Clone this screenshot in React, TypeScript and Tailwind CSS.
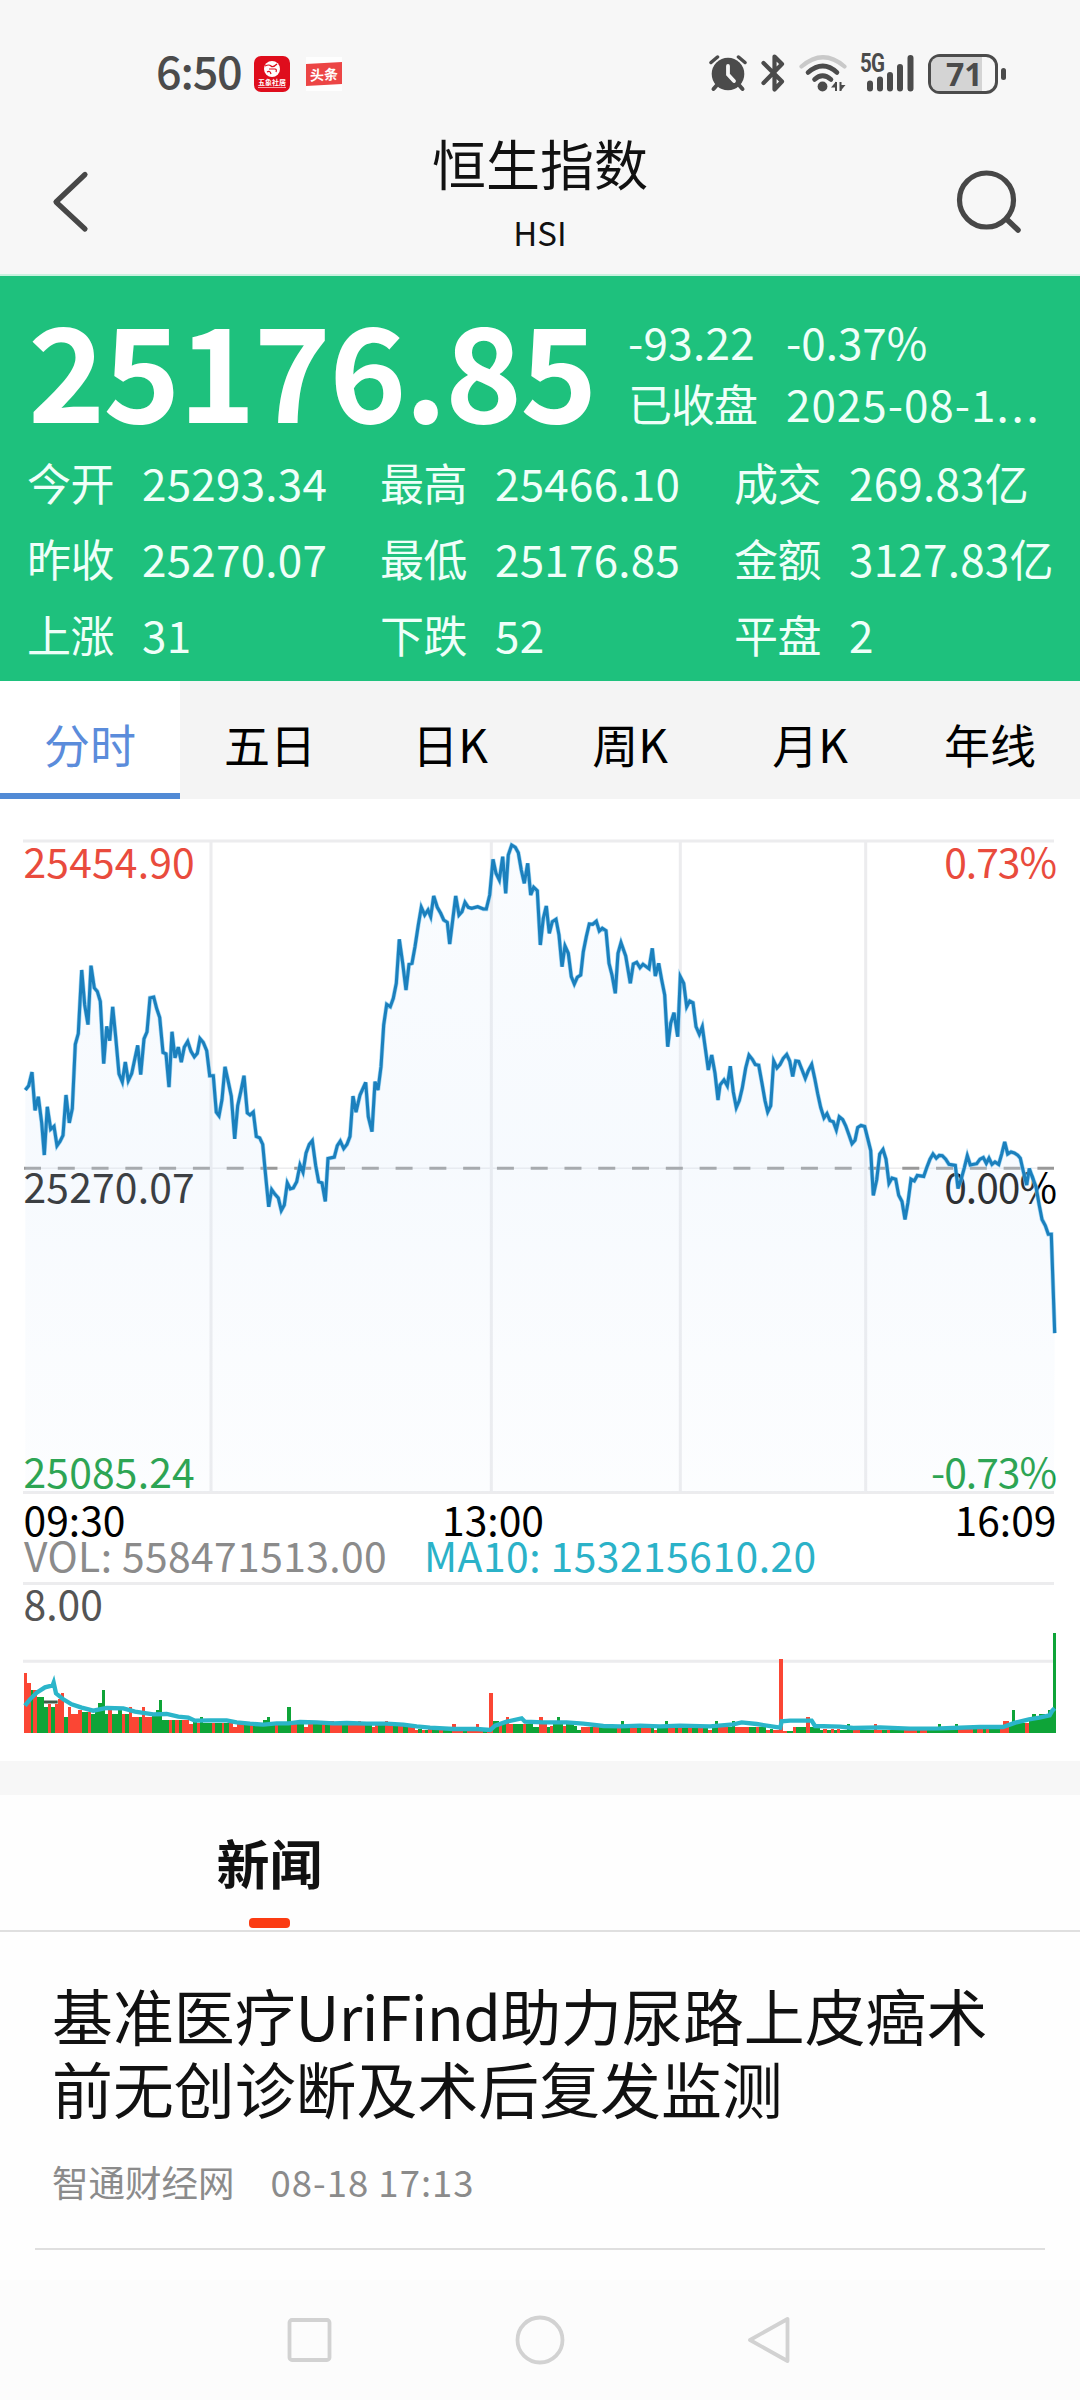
import React from 'react';

const FONT = "font-['Noto_Sans_CJK_SC','Noto_Sans',sans-serif]";

type Stat = { label: string; value: string };

const STATS: Stat[] = [
  { label: '今开', value: '25293.34' },
  { label: '最高', value: '25466.10' },
  { label: '成交', value: '269.83亿' },
  { label: '昨收', value: '25270.07' },
  { label: '最低', value: '25176.85' },
  { label: '金额', value: '3127.83亿' },
  { label: '上涨', value: '31' },
  { label: '下跌', value: '52' },
  { label: '平盘', value: '2' },
];

const TABS = ['分时', '五日', '日K', '周K', '月K', '年线'];

/* Price samples per session block; each block has its own origin and vertical unit. */
const PRICE_BLOCKS = [
  {
    x: 0,
    y: 680,
    unitY: 2.8,
    data:
      '76,1148 86,1136 96,1098 105,1205 115,1167 125,1240 133,1330 142,1195 152,1258 162,1250 171,1304 180,1292 189,1275 198,1162 208,1240 217,1200 226,1020 235,990 245,812 254,910 264,965 273,800 283,862 292,872 301,900 311,1074 320,970 329,1010 338,915 347,1000 357,1103 367,1125 376,1070 385,1122 395,1102 413,1023 422,1105 432,1005 441,985 450,890 461,888 470,920 479,945 489,1043 498,1047 507,1140 516,985 525,1058 535,1028 544,1070 553,1028 563,1012 573,1040 583,1055 592,1045 600,1004 610,1015 620,1038 629,1108 640,1108 649,1210 657,1220 666,1175 675,1083 685,1125 694,1165 704,1285 713,1192 723,1150 732,1108 742,1212 750,1218 760,1210 769,1278 779,1282 788,1300 797,1390 806,1475 815,1427 825,1440 835,1450 844,1485 853,1470 862,1408 871,1425 880,1422 890,1405 900,1358 909,1378 918,1325 928,1300 937,1290 947,1360 956,1405 966,1408 976,1460 984,1340 1003,1336 1012,1304 1021,1291 1031,1312 1041,1300 1050,1278 1059,1165 1068,1210',
  },
  {
    x: 360,
    y: 820,
    unitY: 3,
    data:
      '0,825 17,787 25,890 36,935 45,785 54,810 63,740 71,615 80,553 91,560 100,535 109,490 118,358 128,430 138,510 147,433 156,430 165,380 175,315 184,262 194,285 204,270 212,290 221,228 232,262 242,280 251,300 262,307 269,372 278,300 287,228 297,285 306,275 315,247 325,262 335,265 353,260 370,267 379,267 389,225 399,118 408,160 418,180 428,110 437,220 445,105 455,75 466,82 475,98 484,150 493,190 503,130 512,225 521,202 532,212 541,375 550,295 559,258 568,340 577,305 588,298 597,345 606,440 615,378 625,400 634,470 643,492 652,472 662,465 670,395 679,350 688,312 698,313 709,304 718,333 727,325 738,332 747,430 756,465 766,520 774,400 783,368 797,408 811,490 820,432 830,427 840,443 849,433 867,446 877,385 886,468 896,430 905,480 914,525 923,680 932,610 942,578 953,650 961,470 971,490 980,560 989,543 999,548 1008,620 1018,643 1027,620 1036,685 1045,750 1055,705 1065,760 1074,840',
  },
  {
    x: 720,
    y: 820,
    unitY: 2.904,
    data:
      '0,770 4,765 12,755 22,772 31,715 40,790 49,835 58,815 67,778 77,720 87,683 97,695 106,710 116,712 126,765 135,815 143,848 152,830 161,700 171,720 180,710 190,692 200,681 209,700 218,745 227,700 236,701 246,725 256,750 265,728 275,710 284,750 293,795 302,835 312,865 321,853 330,873 340,876 349,900 358,862 368,870 377,888 387,915 396,940 405,930 413,893 423,887 434,890 443,925 452,960 460,1090 470,1045 479,970 489,957 498,985 507,1055 516,1040 527,1043 536,1090 546,1108 555,1160 564,1110 573,1043 583,1048 592,1032 611,1035 620,1010 630,985 639,970 649,982 658,974 667,975 677,985 687,1000 706,1003 714,1070 723,1045 733,1010 742,975 751,1002 770,998 780,985 790,980 799,997 807,982 816,1000 825,993 836,1000 845,970 854,935 863,970 873,964 883,967 893,973 901,982 911,1025 920,1060 928,1012 938,1040 948,1065 957,1115 966,1160 976,1178 985,1203 994,1203 1004,1490',
  },
];

const PRICE_LINE = PRICE_BLOCKS.map((b) =>
  b.data
    .split(' ')
    .map((p) => {
      const [x, y] = p.split(',').map(Number);
      return `${(b.x + x / 3).toFixed(1)},${(b.y + y / b.unitY).toFixed(1)}`;
    })
    .join(' '),
).join(' ');

/* Volume runs: "start top direction", each run lasting until the next one starts. */
const VOLUME =
  '12 40 r;22 70 r;33 90 g;40 90 r;50 111 g;72 140 g;84 131 r;93 142 g;104 131 r;113 118 r;123 100 r;132 172 g;144 142 r;153 162 r;175 150 r;185 155 g;204 155 r;214 162 g;225 150 g;235 130 g;245 90 g;255 162 g;265 150 r;275 162 g;295 150 g;305 162 r;316 162 g;326 142 r;337 172 r;358 172 g;366 140 r;376 172 r;396 165 g;408 150 g;417 121 g;427 181 g;446 181 r;456 181 g;466 181 r;478 181 g;486 181 r;508 192 r;518 185 g;530 188 r;540 172 g;550 188 g;575 188 r;585 188 g;605 188 r;613 188 g;628 188 r;640 200 r;650 192 r;672 195 g;690 195 r;700 197 g;730 181 g;740 170 g;750 195 g;765 195 r;773 195 g;800 141 g;812 192 r;832 192 g;853 200 r;865 192 r;880 192 g;905 192 r;915 195 g;930 182 r;942 195 r;965 182 g;972 195 g;983 195 r;1015 182 r;1022 195 r;1035 196 g;1055 200 r;1065 196 r;1075 196 g;1095 182 r;1105 196 r;1120 196 g;1135 196 r;1150 198 g;1165 202 r;1185 211 r;1195 207 g;1205 211 r;1215 211 g;1225 207 r;1235 207 g;1258 209 r;1268 209 g;1297 191 r;1307 209 r;1328 209 g;1340 209 r;1368 191 r;1377 209 r;1390 209 g;1400 209 r;1408 100 r;1418 182 g;1437 192 r;1447 192 g;1458 171 r;1468 192 r;1480 192 g;1508 192 r;1518 192 g;1538 200 g;1558 171 r;1570 192 r;1580 200 g;1590 198 r;1600 192 g;1610 171 g;1620 192 g;1628 198 r;1638 192 g;1650 182 g;1662 198 g;1672 211 g;1682 202 r;1710 202 g;1720 202 r;1738 202 g;1790 202 r;1802 182 g;1812 202 g;1830 202 r;1852 202 g;1862 205 r;1882 202 r;1892 205 g;1902 211 r;1912 202 g;1935 182 g;1945 202 r;1965 202 g;1975 202 r;1985 202 g;2005 202 r;2015 202 g;2035 202 r;2050 202 g;2063 211 r;2075 202 g;2085 182 g;2095 202 r;2125 202 g;2136 182 g;2146 201 r;2186 201 g;2208 201 r;2218 201 g;2238 211 r;2250 207 g;2260 211 r;2278 -2 r;2288 212 r;2300 212 g;2318 202 r;2328 202 g;2358 171 r;2370 202 g;2400 211 g;2410 207 r;2422 211 g;2432 207 r;2442 211 g;2450 207 r;2460 211 g;2480 191 g;2490 210 g;2500 210 r;2520 210 g;2562 191 r;2572 210 r;2586 210 g;2600 210 r;2610 210 g;2652 210 r;2690 210 g;2700 210 r;2720 210 g;2753 191 g;2763 208 g;2805 191 g;2815 208 r;2860 208 g;2870 205 r;2890 205 g;2898 205 r;2908 200 g;2940 195 r;2948 183 r;2968 195 g;2976 150 g;2986 188 g;3016 188 r;3026 178 g;3036 162 g;3048 170 g;3056 162 g;3076 170 g;3084 150 g;3098 -80 g;3108 220 g';

const VOLUME_RUNS = VOLUME.split(';').map((run) => {
  const [x, top, dir] = run.split(' ');
  return { x: Number(x), top: Number(top), up: dir === 'r' };
});

const MA_LINE =
  '15,137 30,118 50,98 75,82 98,76 101,68 108,100 130,118 155,133 185,143 220,152 260,144 310,145 345,155 400,163 440,162 475,170 505,173 525,182 570,181 620,181 650,187 690,191 730,194 770,190 805,190 840,186 890,187 940,190 980,189 1040,191 1100,191 1150,194 1190,199 1230,203 1300,207 1370,207 1411,210 1425,197 1460,185 1505,175 1515,185 1570,187 1640,187 1690,191 1750,198 1800,199 1860,197 1920,199 1980,197 2070,199 2140,193 2165,187 2210,192 2260,200 2281,203 2285,184 2310,182 2375,182 2385,198 2460,200 2500,204 2580,202 2670,206 2760,205 2880,201 2949,201 2986,188 3027,178 3058,173 3089,166 3097,152 3104,145';

function AlarmIcon() {
  return (
    <svg className="h-[38px] w-[38px]" viewBox="0 0 38 38">
      <circle cx="19" cy="20" r="16.3" fill="#4b4b4b" />
      <path d="M8 31 4.5 35M30 31l3.500 4" stroke="#4b4b4b" strokeWidth="4" strokeLinecap="round" />
      <path d="M2 8.500 8.500 3M36 8.500 29.500 3" stroke="#4b4b4b" strokeWidth="3.500" strokeLinecap="round" />
      <path d="M19 12v8.500l6 6.500" stroke="#f7f7f7" strokeWidth="3.800" strokeLinecap="round" fill="none" />
    </svg>
  );
}

function BluetoothIcon() {
  return (
    <svg className="h-[38px] w-6" viewBox="0 0 24 38">
      <path
        d="M2.500 9 21 27.500 13.500 35.500V2.500L21 10 2.500 29"
        fill="none"
        stroke="#4b4b4b"
        strokeWidth="4.200"
        strokeLinecap="round"
        strokeLinejoin="round"
      />
    </svg>
  );
}

function WifiIcon() {
  return (
    <svg className="h-[38px] w-12" viewBox="0 0 48 38" fill="none" strokeLinecap="round">
      <path d="M2.500 12.500Q24 -6 45.500 12.500" stroke="#c9c9c9" strokeWidth="4.200" />
      <path d="M9 18.500Q24 5.500 38 18.500" stroke="#4b4b4b" strokeWidth="4.600" />
      <path d="M15.500 25.500Q23.500 18 32 25.500" stroke="#4b4b4b" strokeWidth="4.600" />
      <circle cx="23.500" cy="32.500" r="4.900" fill="#4b4b4b" />
      <path d="M37 28v9M41.500 28v9" stroke="#4b4b4b" strokeWidth="2" strokeLinecap="butt" />
      <path d="M37 27.500v6h-5zM41.500 37v-6h5z" fill="#4b4b4b" />
    </svg>
  );
}

function SignalIcon() {
  return (
    <div className="relative h-[38px] w-[54px]">
      <span className="absolute left-0 top-0 origin-left scale-x-[0.82] font-['Roboto',sans-serif] text-[25px] font-bold leading-[20px] tracking-[-1px] text-[#4b4b4b]">
        5G
      </span>
      <svg className="h-[38px] w-[54px]" viewBox="0 0 54 38">
        <g stroke="#4b4b4b" strokeWidth="6" strokeLinecap="round">
          <path d="M10 29.500v5M20 25.500v9M30 21v13.500M40 13v21.500M50.500 4v30.500" />
        </g>
      </svg>
    </div>
  );
}

function Battery() {
  return (
    <div className="flex items-center gap-[3px]">
      <div className="relative h-10 w-[70px] rounded-[12px] border-[3px] border-[#4b4b4b]">
        <div className="h-full w-[51px] rounded-l-[8px] bg-[#d4d4d4]" />
        <span className="absolute left-[15px] top-[-5px] font-['Open_Sans',sans-serif] text-[32px] font-bold leading-[44px] text-[#4b4b4b]">
          71
        </span>
      </div>
      <div className="h-3 w-[5px] rounded-full bg-[#4b4b4b]" />
    </div>
  );
}

function StatusBar() {
  return (
    <div className="flex h-[112px] items-start pl-[156px] pr-[74px] pt-[54px]">
      <span className="mt-[-3px] w-[98px] whitespace-nowrap text-[45px] font-medium leading-[38px] tracking-[-1.2px] text-[#4b4b4b]">
        6:50
      </span>
      <div className="mt-[2px] flex h-9 w-9 flex-col items-center rounded-[7px] bg-[#df0d1c] pt-[5px]">
        <svg className="h-4 w-4" viewBox="0 0 16 16">
          <circle cx="8" cy="8" r="8" fill="#fff" />
          <path d="M1 5q4-2 6 0t6-2M5 8h6q2 0 1 3M3 11q3-2 4 2" stroke="#df0d1c" strokeWidth="1.200" fill="none" />
        </svg>
        <span className="mt-[1px] whitespace-nowrap text-[7px] font-bold leading-[8px] text-white">五象社居</span>
        <div className="mt-px h-px w-7 bg-[#f6a5aa]" />
      </div>
      <div className="ml-4 mt-[3px] flex h-[34px] w-9 items-center justify-center bg-[#fefefe]">
        <span className="h-[22px] w-9 -skew-y-3 bg-[#ec4545] text-center text-[14px] font-bold leading-[22px] text-white">
          头条
        </span>
      </div>
      <div className="ml-auto flex">
        <AlarmIcon />
        <div className="ml-[14px]">
          <BluetoothIcon />
        </div>
        <div className="ml-[14px]">
          <WifiIcon />
        </div>
        <div className="ml-[13px]">
          <SignalIcon />
        </div>
        <div className="ml-[14px]">
          <Battery />
        </div>
      </div>
    </div>
  );
}

function Header() {
  return (
    <header className="h-[276px] border-b-2 border-[#c8f2df] bg-[#f7f7f7]">
      <StatusBar />
      <div className="flex h-[162px] items-start justify-between pl-[50px] pr-[54px]">
        <svg className="mt-[58px] h-16 w-11" viewBox="50 170 44 64">
          <path
            d="M85 174.500 56 202l29 27"
            fill="none"
            stroke="#474747"
            strokeWidth="5.200"
            strokeLinecap="round"
            strokeLinejoin="round"
          />
        </svg>
        <div className="mt-[18px] flex flex-col items-center pl-8">
          <h1 className="text-[54px] leading-[66px] text-[#111]">恒生指数</h1>
          <span className="mt-[12px] text-[33px] leading-[48px] text-[#111]">HSI</span>
        </div>
        <svg className="mt-[56px] h-[68px] w-[72px]" viewBox="954 168 72 68" fill="none" stroke="#474747">
          <circle cx="986.500" cy="200" r="27" strokeWidth="5.200" />
          <path d="M1007 219.500 1018 230" strokeWidth="5.500" strokeLinecap="round" />
        </svg>
      </div>
    </header>
  );
}

function Quote() {
  return (
    <section className="h-[405px] bg-[#1ec17d] text-[#effff9]">
      <div className="flex h-[168px] items-start pl-7">
        <span className="mt-[24px] w-[600px] whitespace-nowrap text-[131px] font-bold leading-[132px] tracking-[-2px] text-white">
          25176.85
        </span>
        <div className="mt-[34px] grid grid-cols-[158px_auto] text-[44px] leading-[62px]">
          <span className="tracking-[0.3px]">-93.22</span>
          <span>-0.37%</span>
          <span className="tracking-[-1px]">已收盘</span>
          <span className="whitespace-nowrap tracking-[1px]">
            2025-08-1<span className="tracking-[2.8px]">...</span>
          </span>
        </div>
      </div>
      <div className="grid grid-cols-[353px_354px_auto] pl-[27px] text-[44px] leading-[76px]">
        {STATS.map((s) => (
          <div key={s.label} className="flex whitespace-nowrap">
            <span className="w-[115px] tracking-[-0.5px]">{s.label}</span>
            <span className="tracking-[0.25px]">{s.value}</span>
          </div>
        ))}
      </div>
    </section>
  );
}

function Tabs() {
  return (
    <nav className="grid h-[118px] grid-cols-6 bg-[#f4f4f4] text-center text-[46px] leading-[125px] text-black">
      {TABS.map((t, i) => (
        <div
          key={t}
          className={
            i === 0
              ? 'h-[118px] border-b-[6px] border-[#528ad5] bg-white text-[#5b8cdb]'
              : 'h-[118px]'
          }
        >
          {t}
        </div>
      ))}
    </nav>
  );
}

function Chart() {
  return (
    <svg className="block h-[962px] w-[1080px] bg-white" viewBox="0 799 1080 962" fontSize="40.800">
      <defs>
        <linearGradient id="area" x1="0" x2="0" y1="0" y2="1">
          <stop offset="0" stopColor="#d8e8fa" stopOpacity="0.14" />
          <stop offset="0.5" stopColor="#d8e8fa" stopOpacity="0.22" />
          <stop offset="1" stopColor="#e6effa" stopOpacity="0.12" />
        </linearGradient>
      </defs>

      <g stroke="#ececee" strokeWidth="3">
        <path d="M23 841H1054M23 1492.500H1054M23 1583.600H1054M23 1661.300H1054" />
        <path d="M211 841V1492M491.300 841V1492M680.300 841V1492M865.700 841V1492" />
        <path d="M24 1168.300H1054" strokeWidth="1.500" />
      </g>
      <path d="M24 1168.300H1054" stroke="#999" strokeWidth="3" strokeDasharray="17 16.780" />

      <g letterSpacing="0.200">
        <text x="23.500" y="877.500" fill="#e94b3d">25454.90</text>
        <text x="23.500" y="1202.500" fill="#111">25270.07</text>
        <text x="23.500" y="1487.500" fill="#129a3c">25085.24</text>
      </g>
      <g textAnchor="end" letterSpacing="-1">
        <text x="1056" y="877.500" fill="#e94b3d">0.73%</text>
        <text x="1056" y="1202.500" fill="#000">0.00%</text>
        <text x="1056" y="1487.500" fill="#129a3c">-0.73%</text>
      </g>

      <polygon points={`25.3,1492 ${PRICE_LINE} 1054,1492`} fill="url(#area)" />
      <polyline points={PRICE_LINE} fill="none" stroke="#7cc4ee" strokeWidth="4.400" strokeLinejoin="miter" opacity="0.7" />
      <polyline points={PRICE_LINE} fill="none" stroke="#1b80bd" strokeWidth="3.100" strokeLinejoin="miter" />

      <g fill="#000">
        <text x="23.500" y="1535.500">09:30</text>
        <text x="493" y="1535.500" textAnchor="middle">13:00</text>
        <text x="1056.500" y="1535.500" textAnchor="end">16:09</text>
      </g>
      <text x="24" y="1571.500" fill="#8b8b8b" letterSpacing="0.400">VOL: 558471513.00</text>
      <text x="424" y="1571.500" fill="#2bb2c8" letterSpacing="0.480">MA10: 153215610.20</text>
      <text x="23.500" y="1619.500" fill="#555">8.00</text>

      <g transform="translate(20 1660) scale(0.33333)">
        {VOLUME_RUNS.slice(0, -1).map((r, i) => (
          <rect
            key={r.x}
            x={r.x}
            y={r.top}
            width={VOLUME_RUNS[i + 1].x - r.x}
            height={220 - r.top}
            fill={r.up ? '#fb4634' : '#0ea438'}
            shapeRendering="crispEdges"
          />
        ))}
        <path d="M72 126H113" stroke="#3f5a48" strokeWidth="9" />
        <polyline points={MA_LINE} fill="none" stroke="#2bb5ca" strokeWidth="13" strokeLinejoin="miter" />
      </g>
    </svg>
  );
}

function News() {
  return (
    <section className="border-t-[34px] border-[#f7f7f7] bg-[#fefefe]">
      <div className="flex h-[137px] border-b-2 border-[#dfdfdf]">
        <div className="flex w-[539px] flex-col items-center">
          <h2 className="mt-[27px] text-[53px] font-bold leading-[80px] text-[#111]">新闻</h2>
          <div className="mt-[16px] h-[10px] w-[41px] rounded-[4px] bg-[#fb3b12]" />
        </div>
      </div>
      <article className="mx-[35px] h-[318px] border-b-2 border-[#dfdfdf] px-[17px] pt-[47px]">
        <h3 className="text-[60.900px] leading-[72.500px] text-[#111]">
          基准医疗<span className="tracking-[-0.7px]">UriFind</span>助力尿路上皮癌术前无创诊断及术后复发监测
        </h3>
        <div className="mt-[31px] flex gap-[36px] text-[36.500px] leading-[54px] text-[#8b8b8b]">
          <span>智通财经网</span>
          <span className="tracking-[1px]">08-18 17:13</span>
        </div>
      </article>
      <div className="h-[30px]" />
    </section>
  );
}

function NavBar() {
  return (
    <div className="flex h-[120px] items-center justify-center bg-[#fcfcfc]">
      <svg className="h-[50px] w-[520px]" viewBox="280 2315 520 50" fill="none" stroke="#d2d2d2" strokeWidth="3.800">
        <rect x="289.500" y="2320" width="40" height="40" rx="2.500" />
        <circle cx="540" cy="2340" r="22.500" />
        <path d="M787.500 2319v42L750 2340Z" strokeLinejoin="round" />
      </svg>
    </div>
  );
}

export default function App() {
  return (
    <main className={`flex h-[2400px] w-[1080px] flex-col overflow-hidden bg-white ${FONT}`}>
      <Header />
      <Quote />
      <Tabs />
      <Chart />
      <News />
      <NavBar />
    </main>
  );
}
